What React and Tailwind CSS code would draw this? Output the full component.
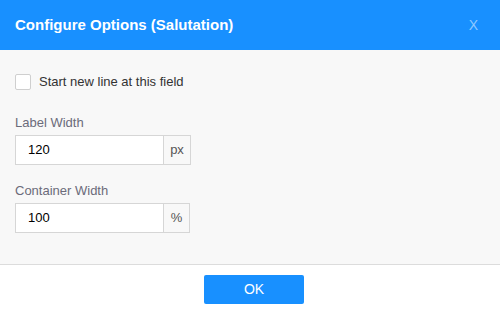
export default function App() {
  return (
    <div className="w-[500px] h-[314px] bg-white flex flex-col font-['Liberation_Sans',Arial,sans-serif]">
      <div className="h-[50px] bg-[#1890ff] flex items-center justify-between pl-[15px] pr-[22px]">
        <span className="text-white font-bold text-[15px]">Configure Options (Salutation)</span>
        <span className="text-[#8ec8ff] text-[14px] font-light">X</span>
      </div>
      <div className="h-[215px] bg-[#f8f8f8] border-b border-[#dcdcdc] px-[15px] pt-[24px]">
        <label className="flex items-center gap-[8px] h-[16px]">
          <span className="w-[16px] h-[16px] bg-white border border-[#cfcfcf] rounded-[2px]" />
          <span className="text-[13px] text-[#333]">Start new line at this field</span>
        </label>
        <div className="mt-[25px] text-[13px] text-[#6b6b7a] leading-[16px]">Label Width</div>
        <div className="mt-[4px] flex w-[176px] h-[30px] border border-[#d6d6d6] bg-white">
          <div className="flex-1 pl-[12px] flex items-center text-[13px] text-black">120</div>
          <div className="w-[27px] border-l border-[#d6d6d6] bg-[#f8f8f8] flex items-center justify-center text-[13px] text-[#555]">px</div>
        </div>
        <div className="mt-[18px] text-[13px] text-[#6b6b7a] leading-[16px]">Container Width</div>
        <div className="mt-[4px] flex w-[175px] h-[30px] border border-[#d6d6d6] bg-white">
          <div className="flex-1 pl-[12px] flex items-center text-[13px] text-black">100</div>
          <div className="w-[26px] border-l border-[#d6d6d6] bg-[#f8f8f8] flex items-center justify-center text-[13px] text-[#555]">%</div>
        </div>
      </div>
      <div className="flex-1 flex justify-center pt-[10px] pl-[8px]">
        <button className="w-[100px] h-[29px] bg-[#1890ff] rounded-[2px] text-white text-[14px]">OK</button>
      </div>
    </div>
  );
}
